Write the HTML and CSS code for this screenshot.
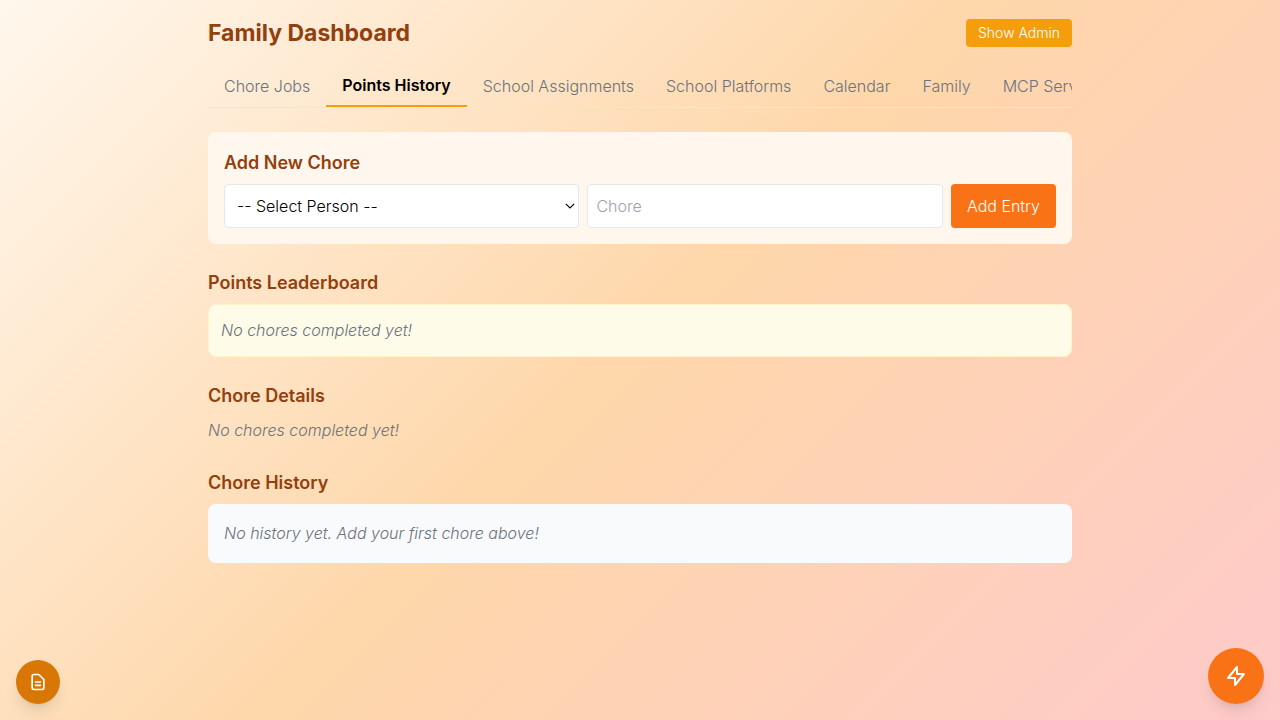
FILE: index.html
```html
<!DOCTYPE html>
<html lang="en">
<head>
<meta charset="utf-8">
<meta name="viewport" content="width=device-width, initial-scale=1">
<title>Family Dashboard</title>
<link rel="stylesheet" href="styles.css">
</head>
<body>
<div class="container">
  <header class="header">
    <h1 class="title">Family Dashboard</h1>
    <button class="admin" type="button">Show Admin</button>
  </header>
  <nav class="tabs" aria-label="Sections">
    <button class="tab" type="button">Chore Jobs</button>
    <button class="tab active" type="button">Points History</button>
    <button class="tab" type="button">School Assignments</button>
    <button class="tab" type="button">School Platforms</button>
    <button class="tab" type="button">Calendar</button>
    <button class="tab" type="button">Family</button>
    <button class="tab" type="button">MCP Servers</button>
  </nav>
  <main class="content">
    <section class="card add">
      <h2 class="heading">Add New Chore</h2>
      <form class="row">
        <div class="picker">
          <select class="field select" aria-label="Person"><option>-- Select Person --</option></select>
          <svg class="chevron" width="10" height="6" viewBox="0 0 10 6" fill="none" stroke="#000" stroke-width="1.1"><path d="M.8.8 5 5 9.200.8"/></svg>
        </div>
        <input class="field" type="text" placeholder="Chore" aria-label="Chore">
        <button class="submit" type="button">Add Entry</button>
      </form>
    </section>
    <section>
      <h2 class="heading">Points Leaderboard</h2>
      <div class="card leader"><p class="empty">No chores completed yet!</p></div>
    </section>
    <section>
      <h2 class="heading">Chore Details</h2>
      <p class="empty">No chores completed yet!</p>
    </section>
    <section>
      <h2 class="heading">Chore History</h2>
      <div class="card history"><p class="empty">No history yet. Add your first chore above!</p></div>
    </section>
  </main>
</div>
<button class="fab notes" type="button" aria-label="Notes">
  <svg width="20" height="20" viewBox="0 0 24 24" fill="none" stroke="currentColor" stroke-width="2" stroke-linecap="round" stroke-linejoin="round"><path d="M9 12h6m-6 4h6m2 5H7a2 2 0 01-2-2V5a2 2 0 012-2h5.586a1 1 0 01.707.293l5.414 5.414a1 1 0 01.293.707V19a2 2 0 01-2 2z"/></svg>
</button>
<button class="fab quick" type="button" aria-label="Quick actions">
  <svg width="24" height="24" viewBox="0 0 24 24" fill="none" stroke="currentColor" stroke-width="2" stroke-linecap="round" stroke-linejoin="round"><path d="M13 10V3L4 14h7v7l9-11h-7z"/></svg>
</button>
</body>
</html>
```

FILE: styles.css
```css
*, *::before, *::after { box-sizing: border-box; }
body {
  margin: 0;
  min-height: 100vh;
  font-family: Inter, "Liberation Sans", sans-serif;
  font-size: 16px;
  font-weight: 300;
  line-height: 24px;
  color: #000;
  background: linear-gradient(135deg, #fff7ed 0%, #fed7aa 49%, #fecaca 100%);
}
h1, h2, p { margin: 0; }
button, input, select { font: inherit; color: inherit; margin: 0; }
button { border: 0; background: none; cursor: pointer; }
.container { max-width: 896px; margin: 0 auto; padding: 16px; }
.header { display: flex; justify-content: space-between; align-items: center; margin-bottom: 15px; }
.title { font-size: 23px; line-height: 34px; font-weight: 700; color: #92400e; }
.admin { padding: 4px 12px; border-radius: 4px; background: #f59e0b; color: #fff; font-size: 14px; line-height: 20px; }
.tabs { display: flex; overflow: hidden; border-bottom: 1px solid #e5e7eb; margin-bottom: 24px; }
.tab { flex: none; padding: 8px 16px; color: #6b7280; white-space: nowrap; }
.active { border-bottom: 2px solid #f59e0b; color: #000; font-weight: 600; }
.content { display: flex; flex-direction: column; gap: 24px; }
.heading { margin-bottom: 6px; font-size: 18px; line-height: 30px; font-weight: 600; color: #92400e; }
.card { border-radius: 8px; }
.add { padding: 16px; background: #fff7ed; }
.row { display: flex; gap: 8px; }
.picker { position: relative; display: flex; flex: 1 1 64px; min-width: 0; }
.field { flex: 1 1 64px; min-width: 0; height: 44px; padding: 8px; border: 1px solid #e5e7eb; border-radius: 4px; background: #fff; }
.select { appearance: none; padding: 8px 24px 8px 12px; }
.chevron { position: absolute; right: 4px; top: 19px; pointer-events: none; }
.field::placeholder { color: #9ca3af; }
.submit { padding: 8px 16px; border-radius: 4px; background: #f97316; color: #fff; }
.leader { padding: 12px; border: 1px solid #fef3c7; background: #fefce8; }
.history { padding: 16px; background: #f9fafb; }
.empty { line-height: 27px; color: #6b7280; font-style: italic; }
.fab { position: fixed; display: flex; align-items: center; justify-content: center; padding: 0; border-radius: 50%; color: #fff; box-shadow: 0 10px 15px -3px rgb(0 0 0 / 10%), 0 4px 6px -4px rgb(0 0 0 / 10%); }
.notes { left: 16px; bottom: 16px; width: 44px; height: 44px; background: #d97706; }
.quick { right: 16px; bottom: 16px; width: 56px; height: 56px; background: #f97316; }
```
